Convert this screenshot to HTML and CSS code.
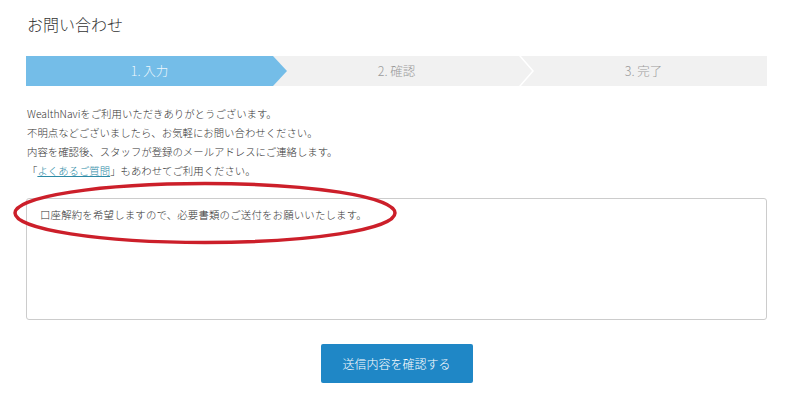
FILE: index.html
```html
<!DOCTYPE html>
<html lang="ja">
<head>
<meta charset="utf-8">
<title>お問い合わせ</title>
<link rel="stylesheet" href="styles.css">
</head>
<body>
<div class="page">
<h1>お問い合わせ</h1>

<ol class="steps">
<li class="active">1. 入力</li>
<li class="sep">2. 確認</li>
<li>3. 完了</li>
</ol>

<p class="intro">WealthNaviをご利用いただきありがとうございます。<br>
不明点などございましたら、お気軽にお問い合わせください。<br>
内容を確認後、スタッフが登録のメールアドレスにご連絡します。<br>
「<a href="#">よくあるご質問</a>」もあわせてご利用ください。</p>

<div class="field">
<textarea id="message" rows="6">口座解約を希望しますので、必要書類のご送付をお願いいたします。</textarea>
<svg class="mark" width="390" height="64" viewBox="0 0 390 64">
<ellipse cx="192" cy="32" rx="190" ry="29.5" fill="none" stroke="#cc1f2a" stroke-width="3.5"/>
</svg>
</div>

<div class="actions">
<button type="submit" class="submit">送信内容を確認する</button>
</div>
</div>
</body>
</html>
```

FILE: styles.css
```css
body {
    margin: 0;
    background: #fff;
    color: #333;
    font-family: "Noto Sans CJK JP", "DejaVu Sans", sans-serif;
    font-weight: 300;
}

.page {
    width: 741px;
    padding: 12px 0 0 26px;
}

h1 {
    margin: 0 0 20px 1px;
    font-size: 16px;
    font-weight: 300;
    line-height: 24px;
}

.steps {
    display: flex;
    margin: 0;
    padding: 0;
    list-style: none;
    background: #f1f1f1;
}

.steps li {
    position: relative;
    flex: 1;
    height: 30px;
    line-height: 30px;
    text-align: center;
    font-size: 12.5px;
    color: #9a9a9a;
}

.steps li.active {
    background: #74bde8;
    color: #eef7fc;
}

.steps li.active::after {
    content: "";
    position: absolute;
    top: 0;
    left: 100%;
    z-index: 1;
    border-left: 14px solid #74bde8;
    border-top: 15px solid transparent;
    border-bottom: 15px solid transparent;
}

.steps li.sep::after {
    content: "";
    position: absolute;
    top: 0;
    right: -14px;
    width: 15px;
    height: 30px;
    background: #fff;
    clip-path: polygon(0 0, 2px 0, 15px 50%, 2px 100%, 0 100%, 13px 50%);
}

.intro {
    margin: 18px 0 0 1px;
    font-size: 10.4px;
    line-height: 19px;
}

.intro a {
    color: #2b8aa6;
}

.field {
    position: relative;
    margin-top: 18px;
}

#message {
    display: block;
    box-sizing: border-box;
    width: 741px;
    height: 122px;
    margin: 0;
    padding: 6px 13px;
    border: 1px solid #ccc;
    border-radius: 3px;
    font-family: inherit;
    font-weight: 300;
    font-size: 10.4px;
    letter-spacing: 0.2px;
    line-height: 19px;
    color: #333;
    resize: none;
}

.mark {
    position: absolute;
    top: -17px;
    left: -13px;
    overflow: visible;
}

.actions {
    display: flex;
    justify-content: center;
    margin-top: 24px;
}

.submit {
    width: 152px;
    height: 39px;
    border: 0;
    border-radius: 2px;
    background: #1f87c6;
    color: #fff;
    font-family: inherit;
    font-weight: 300;
    font-size: 12px;
}
```
